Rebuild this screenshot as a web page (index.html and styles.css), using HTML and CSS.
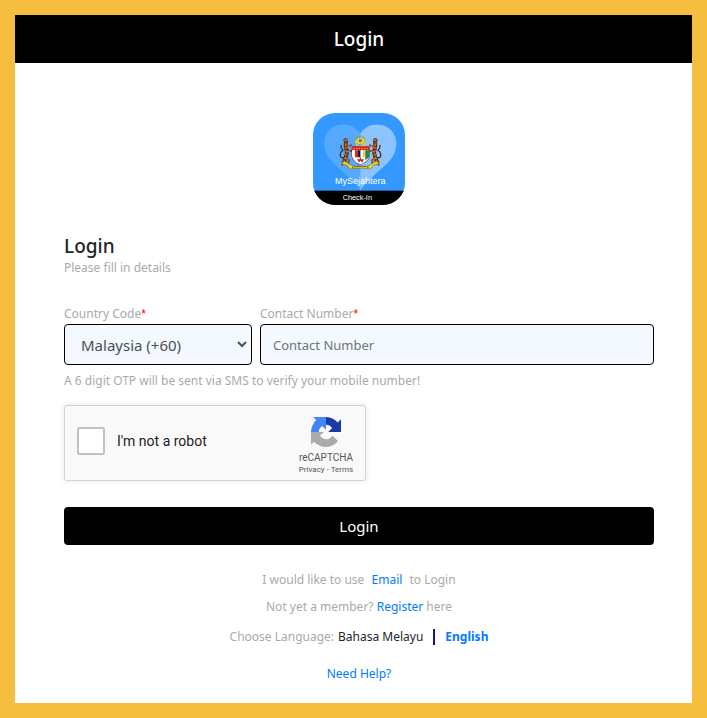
FILE: index.html
```html
<!DOCTYPE html>
<html lang="en">
<head>
<meta charset="utf-8">
<meta name="viewport" content="width=device-width, initial-scale=1">
<title>Login</title>
<link rel="stylesheet" href="styles.css">
</head>
<body>
<div class="page">
  <header class="topbar"><h1>Login</h1></header>
  <main class="content">
    <svg class="logo" viewBox="0 0 276 276" role="img" aria-label="MySejahtera Check-In">
      <defs>
        <clipPath id="tile"><rect width="276" height="276" rx="66"/></clipPath>
        <g id="tiger" stroke-linecap="round" stroke-linejoin="round" fill="none">
          <path d="M99 87L98 98L102 118L98 135L92 148" stroke="#6b3c20" stroke-width="12"/>
          <path d="M100 102L114 97M101 114L115 114M97 134L108 142L106 151M92 148L88 155" stroke="#7d4624" stroke-width="6"/>
          <path d="M92 134Q80 136 82 123Q84 114 90 112Q83 106 84 97" stroke="#4a2c20" stroke-width="4"/>
          <path d="M99 93L97 101L101 118L97 134L93 145M102 103L110 99M103 116L110 115M100 136L106 144" stroke="#c9733a" stroke-width="4"/>
          <path d="M94 100L101 102M96 109L104 111M97 119L104 121M94 129L101 131M92 140L99 141" stroke="#21150f" stroke-width="2"/>
          <circle cx="98" cy="82" r="7" fill="#713c1f"/>
          <path d="M96 81H102" stroke="#e49b56" stroke-width="3"/>
        </g>
      </defs>
      <g clip-path="url(#tile)">
        <rect width="276" height="276" fill="#3399ff"/>
        <path d="M142 62C127 40 104 33 82 35C51 38 34 62 34 90C34 139 74 160 103 188C122 205 136 220 142 233Z" fill="#55aaff"/>
        <path d="M142 62C153 43 175 33 197 35C231 37 250 62 250 91C250 139 211 160 182 188C162 206 148 220 142 233Z" fill="#8cc4ff"/>
        <g>
          <path d="M142 68L145 75L151 70L151 78L159 78L154 84L159 90L151 90L150 97L142 93L134 97L133 90L125 90L130 84L125 78L133 78L133 70L139 75Z" fill="#f2d331" stroke="#665a20" stroke-width="1"/>
          <path d="M128 84Q130 102 142 101Q155 101 157 85" fill="none" stroke="#e7d632" stroke-width="4"/>
          <circle cx="142" cy="83" r="5" fill="#4484b3"/>
          <use href="#tiger"/>
          <use href="#tiger" transform="matrix(-1 0 0 1 285 0)"/>
          <path d="M117 102H169V129Q168 147 142 154Q118 147 117 129Z" fill="#fff" stroke="#512424" stroke-width="2"/>
          <path d="M117 100H169V112H117Z" fill="#d41f2c"/>
          <path d="M121 107H164" stroke="#f4d45b" stroke-width="3" stroke-dasharray="4 4"/>
          <path d="M117 112H126V138Q118 134 117 128Z" fill="#fff"/>
          <path d="M126 112H135V133H126Z" fill="#d82730"/>
          <path d="M135 112H143V133H135Z" fill="#211d1c"/>
          <path d="M143 112H150V133H143Z" fill="#fff"/>
          <path d="M150 112H157V133H150Z" fill="#f3ce2d"/>
          <path d="M157 112H169V130Q167 136 157 142Z" fill="#258453"/>
          <path d="M131 135H153V150L142 153L130 148Z" fill="#fff"/>
          <path d="M134 138L138 145L142 137L147 146L151 138" fill="none" stroke="#b72530" stroke-width="4"/>
          <path d="M104 150Q119 162 142 160Q167 162 180 150L190 145L200 152L181 157L173 168Q143 162 111 168L103 157L84 152L94 145Z" fill="#efd735" stroke="#81701d" stroke-width="2"/>
          <path d="M117 163Q143 157 168 163" fill="none" stroke="#635b24" stroke-width="4" stroke-dasharray="3 2"/>
        </g>
        <text x="142" y="213" class="logo-name">MySejahtera</text>
        <rect y="233" width="276" height="43"/>
        <text x="133" y="262" class="logo-sub">Check-In</text>
      </g>
    </svg>

    <h2>Login</h2>
    <p class="intro">Please fill in details</p>

    <form>
      <div class="fields">
        <div class="field">
          <label for="country">Country Code<span class="required">*</span></label>
          <div class="select-wrap">
            <select id="country"><option>Malaysia (+60)</option></select>
            <svg class="chevron" viewBox="0 0 10 8" aria-hidden="true"><path d="M1 2L5 6L9 2"/></svg>
          </div>
        </div>
        <div class="field">
          <label for="contact">Contact Number<span class="required">*</span></label>
          <input id="contact" type="tel" placeholder="Contact Number">
        </div>
      </div>
      <p class="hint">A 6 digit OTP will be sent via SMS to verify your mobile number!</p>

      <div class="captcha">
        <input id="robot" type="checkbox">
        <label for="robot">I'm not a robot</label>
        <div class="captcha-brand">
          <svg viewBox="0 0 64 64" aria-hidden="true">
            <path d="M64 32V4.700L56.800 11.900C51 4.700 42 .1 32 .1C21.600 .1 12.400 5 6.500 12.700L18.300 24.600A15.600 15.600 0 0 1 23 19.300C25 17.700 28 16.400 32 16.400L33.200 16.500C38.200 16.900 42.500 19.700 45.100 23.700L36.800 32Z" fill="#1c3aa9"/>
            <path d="M32 .1H4.600L11.800 7.300C4.600 13.100 0 22 0 32C0 42.500 5 51.700 12.600 57.600L24.500 45.800A15.600 15.600 0 0 1 19.200 41.100C17.600 39 16.300 36.100 16.300 32L16.400 30.900C16.800 25.900 19.600 21.600 23.600 19L32 27.300Z" fill="#4285f4"/>
            <path d="M0 32V59.200L7.200 52C13 59.200 22 63.800 32 63.800C42.400 63.800 51.600 58.900 57.500 51.200L45.700 39.300A15.600 15.600 0 0 1 41 44.600C39 46.200 36 47.500 32 47.500L30.800 47.400C25.800 47 21.500 44.200 18.900 40.200L27.200 32Z" fill="#ababab"/>
          </svg>
          <span class="captcha-name">reCAPTCHA</span>
          <span class="captcha-links"><a href="#">Privacy</a> - <a href="#">Terms</a></span>
        </div>
      </div>
      <button type="submit">Login</button>
    </form>

    <div class="links">
      <p>I would like to use <a class="email" href="#">Email</a> to Login</p>
      <p>Not yet a member? <a href="#">Register</a> here</p>
      <p class="language">Choose Language: <a class="plain" href="#">Bahasa Melayu</a><span class="divider"></span><a class="current" href="#">English</a></p>
      <p class="help"><a href="#">Need Help?</a></p>
    </div>
  </main>
</div>
</body>
</html>
```
FILE: styles.css
```css
* { box-sizing: border-box; }
body {
  margin: 0;
  padding: 15px;
  background: #f5be3e;
  color: #212529;
  font: 12px/20px "Noto Sans", "Open Sans", sans-serif;
}
h1, h2, p { margin: 0; }
a { color: #007bff; text-decoration: none; }
.page { background: #fff; padding-bottom: 19px; }
.topbar {
  padding: 12px 38px 12px 49px;
  background: #000;
  color: #fff;
  text-align: center;
}
h1, h2 { font-size: 19px; line-height: 24px; font-weight: 500; }
.content { padding: 50px 38px 0 49px; color: #aaa; }
.logo { display: block; width: 92px; height: 92px; margin: 0 auto 29px; }
.logo-name, .logo-sub { fill: #fff; font-family: "Liberation Sans", sans-serif; text-anchor: middle; }
.logo-name { font-size: 27px; }
.logo-sub { font-size: 22px; }
h2 { color: #212529; }
.intro { margin-bottom: 26px; }
.fields { display: grid; grid-template-columns: 188fr 394fr; gap: 8px; }
.field label { display: block; }
.required { color: #f00; font-family: "Liberation Sans", sans-serif; }
.select-wrap { position: relative; }
.field select, .field input {
  display: block;
  width: 100%;
  height: 41px;
  padding: 0 12px;
  border: 1px solid #000;
  border-radius: 4px;
  background: #f4f9ff;
  color: #495057;
  font: 15px "Noto Sans", "Open Sans", sans-serif;
}
.field select { appearance: none; padding-left: 16px; }
.field input { font-size: 13px; }
.field input::placeholder { color: #6c757d; opacity: 1; }
.chevron {
  position: absolute;
  right: 5px;
  top: 16px;
  width: 10px;
  height: 8px;
  fill: none;
  stroke: #495057;
  stroke-width: 2;
  pointer-events: none;
}
.hint { margin: 6px 0 14px; }
.captcha {
  display: flex;
  align-items: center;
  max-width: 302px;
  height: 76px;
  margin-bottom: 26px;
  padding: 0 8px 4px 12px;
  border: 1px solid #d3d3d3;
  border-radius: 3px;
  background: #f9f9f9;
  box-shadow: 0 0 4px 1px rgba(0, 0, 0, .08);
  color: #222;
  font-family: Roboto, sans-serif;
}
.captcha input {
  appearance: none;
  width: 28px;
  height: 28px;
  margin: 0 12px 0 0;
  border: 2px solid #c1c1c1;
  border-radius: 2px;
  background: #fff;
}
.captcha input:checked { background: #4285f4; }
.captcha label { font-size: 14px; }
.captcha-brand {
  display: flex;
  flex-direction: column;
  align-items: center;
  width: 62px;
  margin-left: auto;
  padding-top: 10px;
  color: #555;
}
.captcha-brand svg { width: 30px; height: 30px; margin-bottom: 5px; }
.captcha-name { font-size: 10px; line-height: 12px; }
.captcha-links { font-size: 8px; line-height: 12px; white-space: nowrap; }
.captcha-links a { color: #555; }
button {
  display: block;
  width: 100%;
  height: 38px;
  border: 0;
  border-radius: 4px;
  background: #000;
  color: #fff;
  font: 15px "Noto Sans", "Open Sans", sans-serif;
}
.links { padding-top: 25px; text-align: center; }
.links p { margin-bottom: 7px; }
.email { margin: 0 4px; }
.links .language {
  display: flex;
  flex-wrap: wrap;
  align-items: center;
  justify-content: center;
  margin: 10px 0 17px;
}
.plain { margin-left: 4px; color: #212529; }
.divider { width: 2px; height: 16px; margin: 0 10px; background: #191970; }
.current { font-weight: 700; }
.links .help { margin: 0; }
```
